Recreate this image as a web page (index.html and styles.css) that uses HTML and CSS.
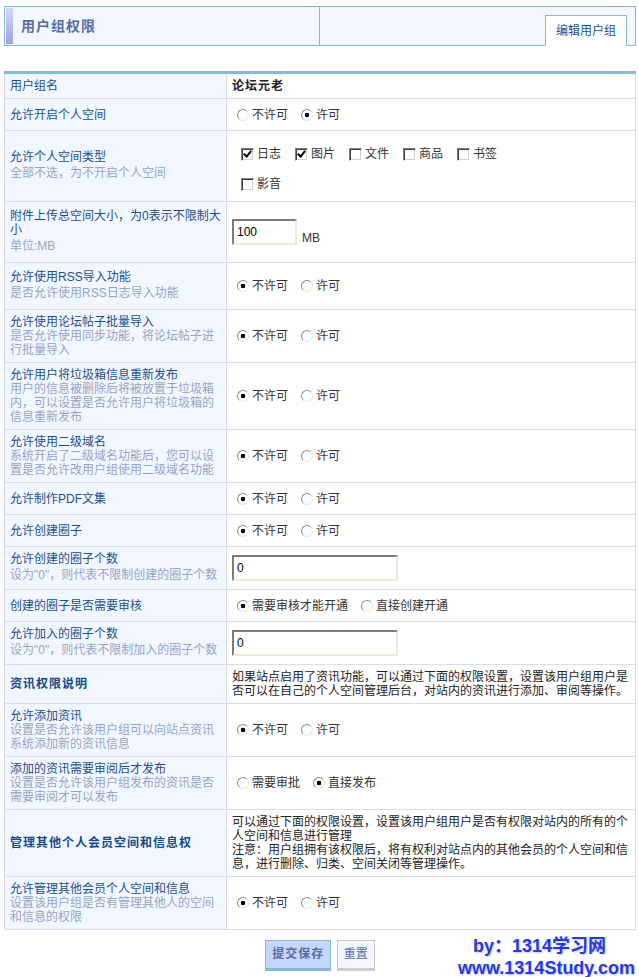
FILE: index.html
```html
<!DOCTYPE html>
<html lang="zh-CN">
<head>
    <meta charset="UTF-8">
    <title>用户组权限</title>
    <link rel="stylesheet" href="styles.css">
</head>
<body>
<div class="page">
    <div class="title-bar">
        <div class="title-cell">
            <span class="accent"></span>
            <h3>用户组权限</h3>
        </div>
        <div class="tab-cell">
            <a class="tab" href="#">编辑用户组</a>
        </div>
    </div>

    <form class="perm-form">
        <table class="perm-table">
            <colgroup><col class="col-label"><col></colgroup>
            <tr class="head">
                <td class="label">用户组名</td>
                <td><b class="strong">论坛元老</b></td>
            </tr>
            <tr>
                <td class="label">允许开启个人空间</td>
                <td>
                    <div class="opts">
                        <label><input type="radio" name="space"> 不许可</label>
                        <label><input type="radio" name="space" checked> 许可</label>
                    </div>
                </td>
            </tr>
            <tr>
                <td class="label">允许个人空间类型<span class="desc one">全部不选，为不开启个人空间</span></td>
                <td>
                    <div class="checks">
                        <label><input type="checkbox" checked> 日志</label>
                        <label><input type="checkbox" checked> 图片</label>
                        <label><input type="checkbox"> 文件</label>
                        <label><input type="checkbox"> 商品</label>
                        <label><input type="checkbox"> 书签</label>
                        <label><input type="checkbox"> 影音</label>
                    </div>
                </td>
            </tr>
            <tr class="tall">
                <td class="label">附件上传总空间大小，为0表示不限制大小<span class="desc one">单位:MB</span></td>
                <td>
                    <div class="field">
                        <input type="text" class="txt short" value="100">
                        <span class="unit">MB</span>
                    </div>
                </td>
            </tr>
            <tr class="tall">
                <td class="label">允许使用RSS导入功能<span class="desc one">是否允许使用RSS日志导入功能</span></td>
                <td>
                    <div class="opts">
                        <label><input type="radio" name="rss" checked> 不许可</label>
                        <label><input type="radio" name="rss"> 许可</label>
                    </div>
                </td>
            </tr>
            <tr>
                <td class="label">允许使用论坛帖子批量导入<span class="desc">是否允许使用同步功能，将论坛帖子进行批量导入</span></td>
                <td>
                    <div class="opts">
                        <label><input type="radio" name="bbs" checked> 不许可</label>
                        <label><input type="radio" name="bbs"> 许可</label>
                    </div>
                </td>
            </tr>
            <tr>
                <td class="label">允许用户将垃圾箱信息重新发布<span class="desc">用户的信息被删除后将被放置于垃圾箱内，可以设置是否允许用户将垃圾箱的信息重新发布</span></td>
                <td>
                    <div class="opts">
                        <label><input type="radio" name="trash" checked> 不许可</label>
                        <label><input type="radio" name="trash"> 许可</label>
                    </div>
                </td>
            </tr>
            <tr>
                <td class="label">允许使用二级域名<span class="desc">系统开启了二级域名功能后，您可以设置是否允许改用户组使用二级域名功能</span></td>
                <td>
                    <div class="opts">
                        <label><input type="radio" name="domain" checked> 不许可</label>
                        <label><input type="radio" name="domain"> 许可</label>
                    </div>
                </td>
            </tr>
            <tr>
                <td class="label">允许制作PDF文集</td>
                <td>
                    <div class="opts">
                        <label><input type="radio" name="pdf" checked> 不许可</label>
                        <label><input type="radio" name="pdf"> 许可</label>
                    </div>
                </td>
            </tr>
            <tr>
                <td class="label">允许创建圈子</td>
                <td>
                    <div class="opts">
                        <label><input type="radio" name="group" checked> 不许可</label>
                        <label><input type="radio" name="group"> 许可</label>
                    </div>
                </td>
            </tr>
            <tr>
                <td class="label">允许创建的圈子个数<span class="desc one">设为"0"，则代表不限制创建的圈子个数</span></td>
                <td><input type="text" class="txt long" value="0"></td>
            </tr>
            <tr>
                <td class="label">创建的圈子是否需要审核</td>
                <td>
                    <div class="opts">
                        <label><input type="radio" name="audit" checked> 需要审核才能开通</label>
                        <label><input type="radio" name="audit"> 直接创建开通</label>
                    </div>
                </td>
            </tr>
            <tr>
                <td class="label">允许加入的圈子个数<span class="desc one">设为"0"，则代表不限制加入的圈子个数</span></td>
                <td><input type="text" class="txt long" value="0"></td>
            </tr>
            <tr>
                <td class="label"><b class="strong">资讯权限说明</b></td>
                <td class="note">如果站点启用了资讯功能，可以通过下面的权限设置，设置该用户组用户是否可以在自己的个人空间管理后台，对站内的资讯进行添加、审阅等操作。</td>
            </tr>
            <tr>
                <td class="label">允许添加资讯<span class="desc">设置是否允许该用户组可以向站点资讯系统添加新的资讯信息</span></td>
                <td>
                    <div class="opts">
                        <label><input type="radio" name="news" checked> 不许可</label>
                        <label><input type="radio" name="news"> 许可</label>
                    </div>
                </td>
            </tr>
            <tr>
                <td class="label">添加的资讯需要审阅后才发布<span class="desc">设置是否允许该用户组发布的资讯是否需要审阅才可以发布</span></td>
                <td>
                    <div class="opts">
                        <label><input type="radio" name="newsaudit"> 需要审批</label>
                        <label><input type="radio" name="newsaudit" checked> 直接发布</label>
                    </div>
                </td>
            </tr>
            <tr>
                <td class="label"><b class="strong">管理其他个人会员空间和信息权</b></td>
                <td class="note">可以通过下面的权限设置，设置该用户组用户是否有权限对站内的所有的个人空间和信息进行管理<br>注意：用户组拥有该权限后，将有权利对站点内的其他会员的个人空间和信息，进行删除、归类、空间关闭等管理操作。</td>
            </tr>
            <tr>
                <td class="label">允许管理其他会员个人空间和信息<span class="desc">设置该用户组是否有管理其他人的空间和信息的权限</span></td>
                <td>
                    <div class="opts">
                        <label><input type="radio" name="manage" checked> 不许可</label>
                        <label><input type="radio" name="manage"> 许可</label>
                    </div>
                </td>
            </tr>
        </table>

        <div class="actions">
            <button type="submit" class="btn submit">提交保存</button>
            <button type="reset" class="btn reset">重置</button>
            <div class="watermark">
                <div class="wm-by">by：1314学习网</div>
                <div class="wm-url">www.1314Study.com</div>
            </div>
        </div>
    </form>
</div>
</body>
</html>
```

FILE: styles.css
```css
body {
    margin: 0;
    padding: 0;
    background: #fff;
    color: #333;
    font: 12px/14px "Liberation Sans", "Noto Sans CJK SC", sans-serif;
}

.page {
    position: relative;
    padding: 6px 3px 0 4px;
}

/* Title bar */
.title-bar {
    display: grid;
    grid-template-columns: 1fr 1fr;
    height: 38px;
    border: 1px solid #86b9d6;
    background: #f2f7ff;
}

.title-cell {
    display: flex;
    align-items: center;
    border-right: 1px solid #86b9d6;
}

.accent {
    align-self: stretch;
    width: 7px;
    margin: 1px 0 1px 1px;
    background: linear-gradient(#d2d9fa, #9ba5dd);
}

.title-cell h3 {
    margin: 0 0 0 8px;
    font-size: 14px;
    letter-spacing: 1px;
    color: #5a6a9f;
}

.tab-cell {
    display: flex;
    justify-content: flex-end;
    align-items: flex-end;
    padding-right: 8px;
}

.tab {
    position: relative;
    margin-bottom: -1px;
    padding: 0 10px;
    height: 30px;
    line-height: 30px;
    border: 1px solid #86b9d6;
    border-bottom: none;
    background: #fff;
    color: #1a4f95;
    text-decoration: none;
}

/* Permission table */
.perm-form {
    margin: 0;
}

.perm-table {
    width: 632px;
    margin-top: 25px;
    table-layout: fixed;
    border-collapse: collapse;
    border: 1px solid #d6deea;
    border-top: 3px solid #88b9d7;
}

.col-label {
    width: 222px;
}

.perm-table td {
    padding: 5px;
    border: 1px solid #d6deea;
    vertical-align: middle;
}

.perm-table tr.tall td {
    padding-top: 7px;
    padding-bottom: 7px;
}

.perm-table .label {
    background: #f2f7ff;
    color: #1b4e8e;
}

.desc {
    display: block;
    color: #97a3c6;
}

.desc.one {
    line-height: 18px;
}

.strong {
    letter-spacing: 1px;
    color: #222;
}

.label .strong {
    color: #134a8b;
}

.note {
    color: #222;
}

/* Radio groups */
.opts {
    display: flex;
    align-items: center;
    height: 21px;
}

.opts label {
    display: inline-flex;
    align-items: center;
    margin-right: 8px;
    color: #333;
}

.opts input {
    -webkit-appearance: none;
    appearance: none;
    box-sizing: border-box;
    width: 12px;
    height: 12px;
    margin: 0 3px 0 5px;
    border: 1px solid;
    border-color: #8c8c8c #e8e6da #e8e6da #8c8c8c;
    border-radius: 50%;
    background: #fff;
}

.opts input:checked {
    background: radial-gradient(circle, #000 0 2px, #fff 2.6px);
}

/* Checkbox list */
.checks {
    display: flex;
    flex-wrap: wrap;
    width: 290px;
    padding: 3px 0 0 9px;
    margin-bottom: -3px;
    box-sizing: border-box;
}

.checks label {
    display: flex;
    align-items: center;
    width: 54px;
    height: 30px;
    color: #333;
}

.checks input {
    -webkit-appearance: none;
    appearance: none;
    position: relative;
    box-sizing: border-box;
    width: 13px;
    height: 13px;
    margin: 0 3px 0 0;
    border: 1px solid;
    border-color: #808080 #fff #fff #808080;
    box-shadow: inset 1px 1px 0 #404040, inset -1px -1px 0 #d4d0c8;
    background: #fff;
}

.checks input:checked::after {
    content: "";
    position: absolute;
    left: 3px;
    top: 0;
    width: 3px;
    height: 6px;
    border: solid #000;
    border-width: 0 2px 2px 0;
    transform: rotate(40deg);
}

/* Text inputs */
.field {
    display: flex;
    align-items: flex-end;
}

.txt {
    box-sizing: border-box;
    height: 26px;
    padding: 0 3px;
    border: 2px solid;
    border-color: #7d7c74 #eceadc #eceadc #7d7c74;
    background: #fff;
    color: #000;
    font: 12px "Liberation Sans", sans-serif;
    vertical-align: middle;
}

.txt.short {
    width: 65px;
}

.txt.long {
    width: 166px;
}

.unit {
    margin-left: 5px;
    color: #333;
}

/* Buttons */
.actions {
    position: relative;
    margin-top: 10px;
    text-align: center;
    height: 37px;
}

.btn {
    height: 31px;
    margin: 0 1px;
    border: 1px solid;
    border-bottom-width: 3px;
    font: 12px/27px "Liberation Sans", "Noto Sans CJK SC", sans-serif;
    color: #5a67a5;
    cursor: pointer;
    vertical-align: top;
}

.btn.submit {
    padding: 0 6px;
    font-weight: bold;
    letter-spacing: 1px;
    background: #c4d8fe;
    border-color: #88b8d6;
}

.btn.reset {
    padding: 0 6px;
    background: #f2f6fe;
    border-color: #c8c8c8 #c8c8c8 #cccccc;
}

/* Watermark in the corner */
.watermark {
    position: absolute;
    left: 454px;
    top: -5px;
    text-align: left;
    font: bold 18px/22px "Liberation Sans", "Noto Sans CJK SC", sans-serif;
    color: #2639de;
    text-shadow: 1px 1px 2px #b9c4f2;
}

.wm-by {
    padding-left: 15px;
}
```
